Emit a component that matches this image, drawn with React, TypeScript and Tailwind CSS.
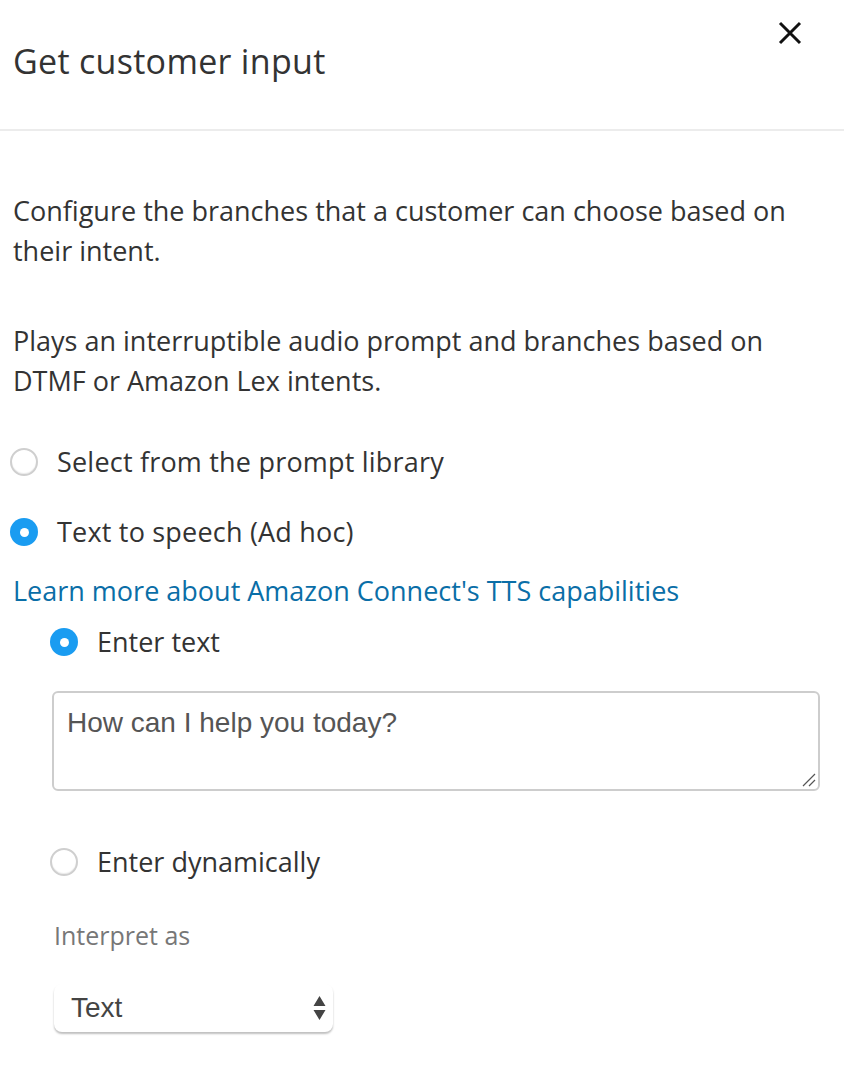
import React from "react";

function Radio({ checked }: { checked: boolean }) {
  return checked ? (
    <span className="flex h-[28px] w-[28px] shrink-0 items-center justify-center rounded-full bg-[#1a9cf1]">
      <span className="h-[9px] w-[9px] rounded-full bg-white" />
    </span>
  ) : (
    <span className="h-[28px] w-[28px] shrink-0 rounded-full border-2 border-[#cfcfcf] bg-white shadow-[inset_0_-1px_1px_rgba(0,0,0,0.08)]" />
  );
}

export default function App() {
  return (
    <div className="h-[1088px] w-[844px] bg-white text-[#333] [font-family:'Open_Sans',sans-serif]">
      <div className="relative h-[131px] border-b-2 border-[#ececec] px-[13px] pt-[38px]">
        <h1 className="text-[34px] leading-[46px] tracking-[0.3px] text-[#333]">Get customer input</h1>
        <button className="absolute right-[42px] top-[21px]">
          <svg width="24" height="24" viewBox="0 0 24 24">
            <path d="M2 2 L22 22 M22 2 L2 22" stroke="#111" strokeWidth="3" />
          </svg>
        </button>
      </div>
      <div className="px-[13px] pt-[60px] text-[27px] leading-[40px]">
        <p>Configure the branches that a customer can choose based on their intent.</p>
        <p className="mt-[50px]">Plays an interruptible audio prompt and branches based on DTMF or Amazon Lex intents.</p>
        <div className="mt-[41px] ml-[-3px] flex items-center gap-[19px]">
          <Radio checked={false} />
          <span className="tracking-[0.2px]">Select from the prompt library</span>
        </div>
        <div className="mt-[30px] ml-[-3px] flex items-center gap-[19px]">
          <Radio checked />
          <span className="tracking-[0.2px]">Text to speech (Ad hoc)</span>
        </div>
        <a className="mt-[19px] block text-[#0a6ea7]">Learn more about Amazon Connect's TTS capabilities</a>
        <div className="ml-[37px] mt-[11px] flex items-center gap-[19px]">
          <Radio checked />
          <span>Enter text</span>
        </div>
        <div className="relative ml-[39px] mr-[11px] mt-[29px] h-[100px] rounded-[6px] border-2 border-[#cdcdcd] px-[13px] pt-[9px]">
          <span className="text-[28px] leading-[40px] text-[#555] [font-family:'Liberation_Sans',sans-serif]">How can I help you today?</span>
          <svg className="absolute bottom-[2px] right-[2px]" width="14" height="14" viewBox="0 0 14 14">
            <path d="M1 13 L13 1 M7 13 L13 7" stroke="#555" strokeWidth="1.2" />
          </svg>
        </div>
        <div className="ml-[37px] mt-[51px] flex items-center gap-[19px]">
          <Radio checked={false} />
          <span>Enter dynamically</span>
        </div>
        <div className="ml-[41px] mt-[33px] text-[25px] leading-[40px] text-[#777]">Interpret as</div>
        <div className="ml-[41px] mt-[29px] flex h-[48px] w-[279px] items-center justify-between rounded-[8px] pl-[17px] pr-[7px] shadow-[0_2px_2px_rgba(0,0,0,0.25)]">
          <span className="text-[28px] text-[#444] [font-family:'Liberation_Sans',sans-serif]">Text</span>
          <svg width="13" height="26" viewBox="0 0 13 26">
            <path d="M6.5 1 L12.5 11 L0.5 11 Z M0.5 15 L12.5 15 L6.5 25 Z" fill="#444" />
          </svg>
        </div>
      </div>
    </div>
  );
}
